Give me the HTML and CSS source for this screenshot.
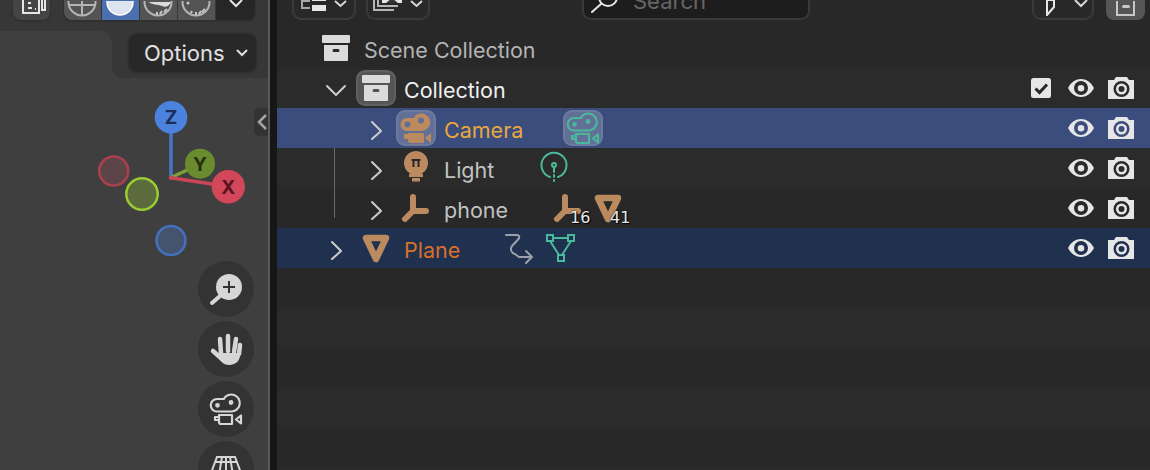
FILE: index.html
```html
<!DOCTYPE html>
<html lang="en">
<head>
    <meta charset="UTF-8">
    <title>Outliner</title>
    <link rel="stylesheet" href="styles.css">
</head>
<body>
    <svg class="defs" xmlns="http://www.w3.org/2000/svg">
        <symbol id="i-right" viewBox="0 0 40 40"><path d="M16 14l9 9-9 8" fill="none" stroke="currentColor" stroke-width="2" stroke-linecap="round" stroke-linejoin="round"/></symbol>
        <symbol id="i-down" viewBox="0 0 40 40"><path d="M11 18l9 9 9-9" fill="none" stroke="currentColor" stroke-width="2" stroke-linecap="round" stroke-linejoin="round"/></symbol>
        <symbol id="i-box" viewBox="0 0 40 40"><path fill="currentColor" fill-rule="evenodd" d="M7 7h26a1 1 0 0 1 1 1v6a1 1 0 0 1-1 1H7a1 1 0 0 1-1-1V8a1 1 0 0 1 1-1zM8 17h24v15a1 1 0 0 1-1 1H9a1 1 0 0 1-1-1zM18 21a1.500 1.500 0 0 0 0 3h4a1.500 1.500 0 0 0 0-3z"/></symbol>
        <symbol id="i-cam-fill" viewBox="0 0 40 40"><path fill="currentColor" fill-rule="evenodd" d="M11 10L17.600 10A8.800 8.800 0 1 1 25 23H11A6.500 6.500 0 0 1 11 10zM11.500 13.500a3 3 0 1 0 0 6 3 3 0 0 0 0-6zM25 9.500a3 3 0 1 0 0 6 3 3 0 0 0 0-6zM12 25h15a1 1 0 0 1 1 1v8a1 1 0 0 1-1 1H14a2 2 0 0 1-2-2v-2H8v-5h4zM29 30l6-5v10z"/></symbol>
        <symbol id="i-cam-line" viewBox="0 0 40 40"><g fill="none" stroke="currentColor" stroke-width="2.200" stroke-linejoin="round"><path d="M11 10L17.800 10A8.500 8.500 0 1 1 25 22.500H11A6.250 6.250 0 0 1 11 10z"/><circle cx="11.500" cy="16.300" r="1.300"/><circle cx="25" cy="13.500" r="1.300"/><path d="M13 26h13v9H15a2 2 0 0 1-2-2zM13 28H9v3h4M30 30.500l5-4v8z"/></g></symbol>
        <symbol id="i-bulb" viewBox="0 0 40 40"><circle cx="20" cy="15" r="12" fill="currentColor"/><path d="M14 25h12v1H14zM13 26h14v3H13zM16 30h8v3.500h-8z" fill="currentColor"/><path d="M15.500 12h9M17.500 12v7M22.500 12v7" fill="none" stroke="#282828" stroke-width="2"/></symbol>
        <symbol id="i-light-data" viewBox="0 0 40 40"><g fill="none" stroke="currentColor" stroke-width="2" stroke-linecap="round"><path d="M16 29a12.500 12.500 0 1 1 8 0"/><circle cx="20" cy="17" r="2"/><path d="M20 19v5M20 27v2M20 32v1"/></g></symbol>
        <symbol id="i-empty" viewBox="0 0 40 40"><path d="M17 9v14h13M17 23L9 31" fill="none" stroke="currentColor" stroke-width="6" stroke-linecap="round" stroke-linejoin="round"/></symbol>
        <symbol id="i-mesh" viewBox="0 0 40 40"><path d="M10 10h20L20 31z" fill="none" stroke="currentColor" stroke-width="6.500" stroke-linejoin="round"/></symbol>
        <symbol id="i-mesh-data" viewBox="0 0 40 40"><g fill="none" stroke="currentColor" stroke-width="2"><path d="M7 7h6v6H7zM28 7h6v6h-6zM18 27h6v6h-6zM13 10h15M10 13l9 14M31 13l-9 14"/></g></symbol>
        <symbol id="i-modifier" viewBox="0 0 40 40"><path d="M6 7h11c2 0 3 2 1.500 4L12 18c-2 3-1 7 3 8l4 3h13M26 23l6 6-6 6" fill="none" stroke="currentColor" stroke-width="2" stroke-linecap="round" stroke-linejoin="round"/></symbol>
        <symbol id="i-check" viewBox="0 0 40 40"><rect x="10" y="10" width="20" height="20" rx="2.500" fill="currentColor"/><path d="M14.500 20.500l4 4 7.500-8" fill="none" stroke="#282828" stroke-width="3"/></symbol>
        <symbol id="i-eye" viewBox="0 0 40 40"><path fill="currentColor" fill-rule="evenodd" d="M7 20C10 14 15 11 20 11s10 3 13 9c-3 6-8 9-13 9s-10-3-13-9zM20 13a7 7 0 1 0 0 14 7 7 0 0 0 0-14zM20 17a3.300 3.300 0 1 1 0 6.600 3.300 3.300 0 0 1 0-6.600z"/></symbol>
        <symbol id="i-render" viewBox="0 0 40 40"><path fill="currentColor" fill-rule="evenodd" d="M7 12h6l2-3h11l2 3h5v19H7zM20.500 13a8 8 0 1 0 0 16 8 8 0 0 0 0-16zM20.500 15.500a5.500 5.500 0 1 1 0 11 5.500 5.500 0 0 1 0-11zM20.500 18a3 3 0 1 0 0 6 3 3 0 0 0 0-6z"/></symbol>
        <symbol id="i-zoom" viewBox="0 0 56 56"><circle cx="31" cy="26" r="13" fill="currentColor"/><path d="M25 26h12M31 20v12" stroke="#333" stroke-width="2"/><path d="M22 35l-8 7" stroke="currentColor" stroke-width="4" stroke-linecap="round"/></symbol>
        <symbol id="i-hand" viewBox="0 0 56 56"><g fill="none" stroke="currentColor" stroke-width="4.500" stroke-linecap="round"><path d="M23 32l-1-14M30 30V15M36 31l2-13M41 33l1-9M24 38l-9-8"/></g><path d="M20 32h22c1 7-4 12-11 12-5 0-8-3-11-8z" fill="currentColor"/></symbol>
        <symbol id="i-persp" viewBox="0 0 40 40"><path d="M11 8h18l9 24H2zM20 8v24M9 13h22M16 8l-4 24M24 8l4 24" fill="none" stroke="currentColor" stroke-width="2"/></symbol>
    </svg>

    <div class="app">
        <div class="viewport">
            <div class="view-head">
                <div class="view-btn">
                    <svg class="view-btn-icon" width="28" height="20" viewBox="0 0 28 20"><path d="M5 0v13h16V0M24 0v10h3V0M10 3h3M10 8h4M17 9h1" fill="none" stroke="#e6e6e6" stroke-width="2"/></svg>
                </div>
                <div class="shading">
                    <div class="seg">
                        <svg width="37" height="19" viewBox="0 0 37 19"><g fill="none" stroke="#b5b5b5" stroke-width="2"><circle cx="18" cy="1" r="13.500"/><path d="M5 4h26M18 0v14"/></g></svg>
                    </div>
                    <div class="seg seg-on">
                        <svg width="37" height="19" viewBox="0 0 37 19"><circle cx="18" cy="1" r="13" fill="#dde3ef" stroke="#fff" stroke-width="1.500"/></svg>
                    </div>
                    <div class="seg">
                        <svg width="37" height="19" viewBox="0 0 37 19"><circle cx="18" cy="1" r="13.500" fill="none" stroke="#b5b5b5" stroke-width="2"/><path d="M5 1h26C29 5 26 7 22 5 18 3 11 4 9 1z" fill="#dcdcdc"/><path d="M27 8l-3 3M22 10l-2 3M17 11v3" stroke="#c8c8c8" stroke-width="2"/></svg>
                    </div>
                    <div class="seg">
                        <svg width="37" height="19" viewBox="0 0 37 19"><circle cx="18" cy="1" r="13.500" fill="none" stroke="#b5b5b5" stroke-width="2"/><circle cx="10" cy="2" r="1.500" fill="#c8c8c8"/><path d="M27 8l-3 3M23 10l-2 3M18 11v3M14 10l-1 2" stroke="#c8c8c8" stroke-width="2"/></svg>
                    </div>
                    <div class="seg seg-dark">
                        <svg width="14" height="8" viewBox="0 0 14 8"><path d="M1 0l6 6 6-6" fill="none" stroke="#e6e6e6" stroke-width="2"/></svg>
                    </div>
                </div>
            </div>
            <div class="tool-row">
                <div class="tool-gap"></div>
                <div class="tool-right">
                    <div class="options">Options
                        <svg width="12" height="8" viewBox="0 0 12 8"><path d="M1 1l5 5 5-5" fill="none" stroke="#e0e0e0" stroke-width="2"/></svg>
                    </div>
                </div>
            </div>

            <svg class="gizmo" width="170" height="170" viewBox="90 95 170 170">
                <circle cx="171" cy="240.500" r="14.500" fill="#45546e" stroke="#4471bd" stroke-width="2.500"/>
                <circle cx="113.700" cy="171" r="14.500" fill="#5c4448" stroke="#a8404f" stroke-width="2.500"/>
                <circle cx="142" cy="194" r="15.700" fill="#5b6b3c" stroke="#9acb33" stroke-width="2.500"/>
                <path d="M171 117v60" stroke="#4677c7" stroke-width="3.500"/>
                <path d="M170 178l30-14" stroke="#7fa034" stroke-width="3.500"/>
                <path d="M169 177.500l59 9" stroke="#c94557" stroke-width="3.500"/>
                <circle cx="171" cy="117.300" r="16.300" fill="#4b82de"/>
                <circle cx="200" cy="163.700" r="15" fill="#6a8c2f"/>
                <circle cx="228.300" cy="186.700" r="16.700" fill="#d2475a"/>
                <text class="axis" x="171" y="124" fill="#1b2f58">Z</text>
                <text class="axis" x="200" y="170.500" fill="#24300f">Y</text>
                <text class="axis" x="228.300" y="193.500" fill="#5a1420">X</text>
            </svg>

            <div class="side-tab">
                <svg width="11" height="16" viewBox="0 0 11 16"><path d="M9 1L2 8l7 7" fill="none" stroke="#a5a5a5" stroke-width="2.500"/></svg>
            </div>

            <div class="nav">
                <div class="nav-btn"><svg width="56" height="56"><use href="#i-zoom"/></svg></div>
                <div class="nav-btn"><svg width="56" height="56"><use href="#i-hand"/></svg></div>
                <div class="nav-btn"><svg width="40" height="40"><use href="#i-cam-line"/></svg></div>
                <div class="nav-btn"><svg width="40" height="40"><use href="#i-persp"/></svg></div>
            </div>
        </div>

        <div class="gutter"></div>

        <div class="outliner">
            <div class="out-head">
                <div class="out-btn">
                    <svg width="26" height="20" viewBox="0 0 26 20"><path d="M1 0v12h8M1 5h8" fill="none" stroke="#a8a8a8" stroke-width="2"/><path d="M11 0h14v5H11zM11 9h14v6H11z" fill="#e6e6e6"/></svg>
                    <svg width="13" height="8" viewBox="0 0 13 8"><path d="M1 1l5.500 5L12 1" fill="none" stroke="#d8d8d8" stroke-width="2"/></svg>
                </div>
                <div class="out-btn out-btn-2">
                    <svg width="30" height="20" viewBox="0 0 30 20"><path d="M1 0v14h20M5 0v10h20" fill="none" stroke="#b5b5b5" stroke-width="2"/><path d="M9 0h20v7H9z" fill="#e6e6e6"/><path d="M13 7l6-5 6 5z" fill="#333"/></svg>
                    <svg width="13" height="8" viewBox="0 0 13 8"><path d="M1 1l5.500 5L12 1" fill="none" stroke="#d8d8d8" stroke-width="2"/></svg>
                </div>
                <div class="search">
                    <svg width="34" height="20" viewBox="0 0 34 20"><circle cx="23" cy="-1" r="9" fill="none" stroke="#e6e6e6" stroke-width="2"/><path d="M16 6L7 14" stroke="#e6e6e6" stroke-width="2" stroke-linecap="round"/></svg>
                    <span class="search-text">Search</span>
                </div>
                <div class="out-btn out-btn-3">
                    <svg width="10" height="16" viewBox="0 0 10 16"><path d="M1 0v15l7-8V0z" fill="none" stroke="#e6e6e6" stroke-width="2"/></svg>
                    <svg width="14" height="8" viewBox="0 0 14 8"><path d="M1 0l6 6 6-6" fill="none" stroke="#d8d8d8" stroke-width="2"/></svg>
                </div>
                <div class="out-new">
                    <svg width="24" height="16" viewBox="0 0 24 16"><path d="M3 0v14h17V0" fill="none" stroke="#c8c8c8" stroke-width="2"/><rect x="8" y="4" width="8" height="3" rx="1.500" fill="#c8c8c8"/></svg>
                </div>
            </div>

            <div class="rows">
                <div class="tree-line"></div>

                <div class="row d0">
                    <span class="ico c-white"><svg width="40" height="40"><use href="#i-box"/></svg></span>
                    <span class="name n-scene">Scene Collection</span>
                </div>

                <div class="row d0">
                    <span class="twist"><svg width="40" height="40"><use href="#i-down"/></svg></span>
                    <span class="ico hi c-white"><svg width="40" height="40"><use href="#i-box"/></svg></span>
                    <span class="name n-active">Collection</span>
                    <span class="vis">
                        <svg width="40" height="40"><use href="#i-check"/></svg>
                        <svg width="40" height="40"><use href="#i-eye"/></svg>
                        <svg width="40" height="40"><use href="#i-render"/></svg>
                    </span>
                </div>

                <div class="row d1 row-sel">
                    <span class="twist"><svg width="40" height="40"><use href="#i-right"/></svg></span>
                    <span class="ico hi c-obj"><svg width="40" height="40"><use href="#i-cam-fill"/></svg></span>
                    <span class="name n-cam">Camera</span>
                    <span class="kids">
                        <span class="ico hi c-data"><svg width="40" height="40"><use href="#i-cam-line"/></svg></span>
                    </span>
                    <span class="vis">
                        <svg width="40" height="40"><use href="#i-eye"/></svg>
                        <svg width="40" height="40"><use href="#i-render"/></svg>
                    </span>
                </div>

                <div class="row d1">
                    <span class="twist"><svg width="40" height="40"><use href="#i-right"/></svg></span>
                    <span class="ico c-obj"><svg width="40" height="40"><use href="#i-bulb"/></svg></span>
                    <span class="name">Light</span>
                    <span class="kids">
                        <span class="ico c-data"><svg width="40" height="40"><use href="#i-light-data"/></svg></span>
                    </span>
                    <span class="vis">
                        <svg width="40" height="40"><use href="#i-eye"/></svg>
                        <svg width="40" height="40"><use href="#i-render"/></svg>
                    </span>
                </div>

                <div class="row d1">
                    <span class="twist"><svg width="40" height="40"><use href="#i-right"/></svg></span>
                    <span class="ico c-obj"><svg width="40" height="40"><use href="#i-empty"/></svg></span>
                    <span class="name">phone</span>
                    <span class="kids">
                        <span class="ico c-obj"><svg width="40" height="40"><use href="#i-empty"/></svg><b class="count">16</b></span>
                        <span class="ico c-obj"><svg width="40" height="40"><use href="#i-mesh"/></svg><b class="count">41</b></span>
                    </span>
                    <span class="vis">
                        <svg width="40" height="40"><use href="#i-eye"/></svg>
                        <svg width="40" height="40"><use href="#i-render"/></svg>
                    </span>
                </div>

                <div class="row d0 row-sel-2">
                    <span class="twist"><svg width="40" height="40"><use href="#i-right"/></svg></span>
                    <span class="ico c-obj"><svg width="40" height="40"><use href="#i-mesh"/></svg></span>
                    <span class="name n-plane">Plane</span>
                    <span class="kids">
                        <span class="ico c-mod"><svg width="40" height="40"><use href="#i-modifier"/></svg></span>
                        <span class="ico c-data"><svg width="40" height="40"><use href="#i-mesh-data"/></svg></span>
                    </span>
                    <span class="vis">
                        <svg width="40" height="40"><use href="#i-eye"/></svg>
                        <svg width="40" height="40"><use href="#i-render"/></svg>
                    </span>
                </div>
            </div>
        </div>
    </div>
</body>
</html>
```

FILE: styles.css
```css
html, body {
    margin: 0;
    padding: 0;
    height: 100%;
    overflow: hidden;
    background: #282828;
}

body {
    font-family: "Inter", "Liberation Sans", sans-serif;
    font-size: 22px;
}

svg {
    display: block;
    flex: none;
}

.defs {
    display: none;
}

.app {
    display: flex;
    height: 470px;
}

/* 3d viewport */
.viewport {
    position: relative;
    width: 268px;
    overflow: hidden;
    background: #3f3f3f;
}

.view-head {
    display: flex;
    align-items: flex-end;
    height: 31px;
    padding-bottom: 11px;
    box-sizing: border-box;
    overflow: hidden;
    background: #373737;
}

.view-btn {
    display: flex;
    justify-content: center;
    align-items: flex-end;
    width: 37px;
    height: 30px;
    margin-left: 13px;
    flex: none;
    background: #454545;
    border-radius: 0 0 8px 8px;
    box-shadow: 0 1px 0 1px #303030;
}

.shading {
    display: flex;
    gap: 1px;
    margin-left: 14px;
    height: 30px;
    flex: none;
    border-radius: 0 0 8px 8px;
    overflow: hidden;
    box-shadow: 0 1px 0 1px #303030;
}

.seg {
    display: flex;
    align-items: flex-end;
    justify-content: center;
    width: 37px;
    background: #545454;
}

.seg-on {
    background: #4c6fb0;
}

.seg-dark {
    width: 39px;
    background: #262626;
    align-items: flex-start;
    padding-top: 10px;
    box-sizing: border-box;
}

.tool-row {
    display: flex;
    height: 47px;
    background: linear-gradient(#373737 50%, #3f3f3f 50%);
}

.tool-gap {
    width: 112px;
    background: #3f3f3f;
    border-top-right-radius: 12px;
}

.tool-right {
    flex: 1;
    background: #373737;
    border-bottom-left-radius: 12px;
    padding: 3px 0 0 17px;
}

.options {
    display: flex;
    align-items: center;
    justify-content: space-between;
    width: 127px;
    height: 38px;
    padding: 0 8px 0 15px;
    box-sizing: border-box;
    color: #e0e0e0;
    background: #282828;
    border-radius: 8px;
    box-shadow: 0 0 0 1.500px #303030;
}

.gizmo {
    position: absolute;
    left: 90px;
    top: 95px;
}

.axis {
    font-family: "Inter", "Liberation Sans", sans-serif;
    font-size: 19px;
    font-weight: 700;
    text-anchor: middle;
}

.side-tab {
    position: absolute;
    right: 0;
    top: 108px;
    width: 14px;
    height: 28px;
    display: flex;
    align-items: center;
    justify-content: flex-end;
    background: #333;
    border-radius: 5px 0 0 5px;
}

.nav {
    position: absolute;
    left: 198px;
    top: 261px;
    display: flex;
    flex-direction: column;
    gap: 4px;
}

.nav-btn {
    display: flex;
    align-items: center;
    justify-content: center;
    width: 56px;
    height: 56px;
    border-radius: 50%;
    background: #333;
    color: #d6d6d6;
}

.gutter {
    width: 9px;
    flex: none;
    box-sizing: border-box;
    background: #161616;
    border-left: 2px solid #5a5a5a;
}

/* outliner */
.outliner {
    flex: 1;
    min-width: 0;
}

.out-head {
    display: flex;
    align-items: flex-end;
    height: 28px;
    padding: 0 0 8px 15px;
    box-sizing: border-box;
    overflow: hidden;
}

.out-btn {
    display: flex;
    align-items: flex-end;
    justify-content: center;
    gap: 7px;
    width: 64px;
    height: 30px;
    flex: none;
    padding-bottom: 2px;
    box-sizing: border-box;
    border: 2px solid #3a3a3a;
    border-radius: 0 0 9px 9px;
}

.out-btn svg:last-child {
    align-self: flex-start;
    margin-top: 8px;
}

.out-btn-2 {
    margin-left: 10px;
}

.out-btn-3 {
    justify-content: flex-start;
    width: 62px;
    margin-left: 222px;
    padding-left: 12px;
    gap: 18px;
}

.search {
    display: flex;
    align-items: flex-end;
    width: 228px;
    height: 30px;
    margin-left: 152px;
    flex: none;
    box-sizing: border-box;
    background: #1d1d1d;
    border: 2px solid #3a3a3a;
    border-radius: 0 0 9px 9px;
    padding-left: 1px;
}

.search-text {
    margin-left: 14px;
    margin-bottom: 6px;
    color: #666;
    line-height: 22px;
}

.out-new {
    display: flex;
    align-items: flex-end;
    justify-content: center;
    width: 39px;
    height: 30px;
    margin-left: 12px;
    flex: none;
    padding-bottom: 3px;
    box-sizing: border-box;
    background: #555;
    border-radius: 0 0 8px 8px;
}

.rows {
    position: relative;
    height: 442px;
    background: repeating-linear-gradient(#282828 0, #282828 40px, #2b2b2b 40px, #2b2b2b 80px);
}

.tree-line {
    position: absolute;
    left: 57px;
    top: 90px;
    width: 1px;
    height: 100px;
    background: #6a6a6a;
}

.row {
    position: relative;
    display: flex;
    align-items: center;
    height: 40px;
    color: #c2c2c2;
}

.d0 {
    padding-left: 39px;
}

.d1 {
    padding-left: 79px;
}

.row-sel {
    background: #3b4d7d;
}

.row-sel-2 {
    background: #20304f;
}

.twist {
    width: 40px;
    flex: none;
    color: #cdcdcd;
}

.ico {
    position: relative;
    display: block;
    width: 40px;
    height: 40px;
    flex: none;
}

.ico svg {
    position: relative;
}

.hi::before {
    content: "";
    position: absolute;
    left: 0;
    right: 0;
    top: 2px;
    bottom: 2px;
    background: rgba(255, 255, 255, 0.2);
    border: 2px solid rgba(255, 255, 255, 0.07);
    border-radius: 9px;
    box-sizing: border-box;
}

.c-white {
    color: #dcdcdc;
}

.c-obj {
    color: #bb8a5e;
}

.c-data {
    color: #4ab99b;
}

.c-mod {
    color: #9ca0aa;
}

.name {
    margin-left: 8px;
    padding-top: 4px;
    font-size: 21.5px;
    white-space: nowrap;
}

.n-scene {
    color: #b4b4b4;
}

.n-active {
    color: #f0f0f0;
}

.n-cam {
    color: #e8a83f;
}

.n-plane {
    color: #d8702a;
}

.kids {
    display: flex;
    margin-left: 40px;
}

.count {
    position: absolute;
    left: 22px;
    top: 20px;
    font-family: "DejaVu Sans", sans-serif;
    font-size: 16px;
    font-weight: 400;
    line-height: 20px;
    color: #e8e8e8;
    text-shadow: 0 0 2px #000, 1px 1px 1px #000;
}

.vis {
    display: flex;
    margin-left: auto;
    padding-right: 9px;
    color: #e6e6e6;
}
```
